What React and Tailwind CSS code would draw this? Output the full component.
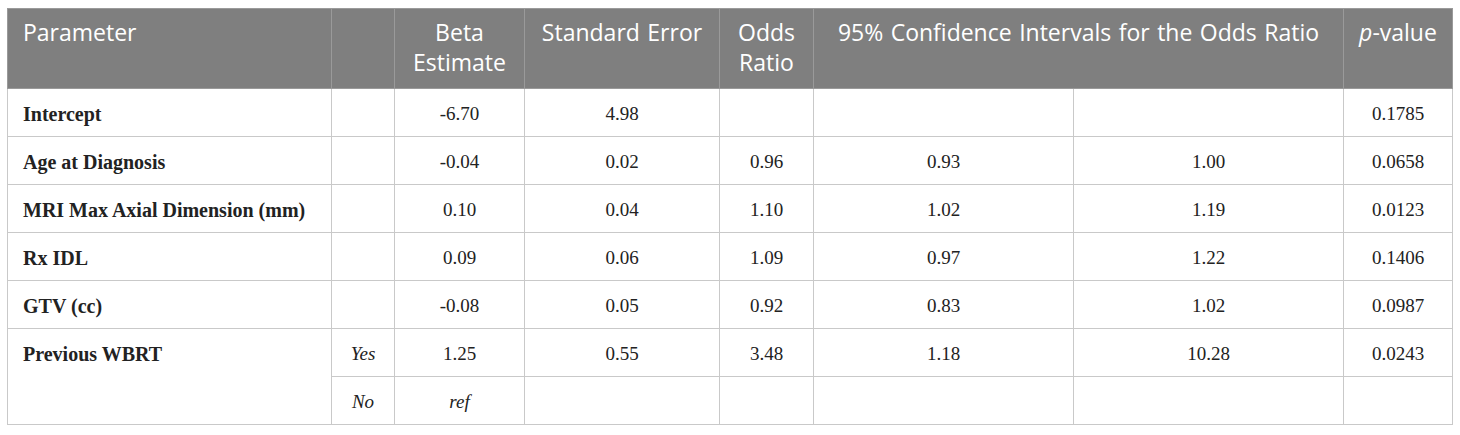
const columns = [324, 63, 130, 195, 94, 260, 270, 109];

const rows = [
  { label: "Intercept", beta: "-6.70", se: "4.98", or: "", lo: "", hi: "", p: "0.1785" },
  { label: "Age at Diagnosis", beta: "-0.04", se: "0.02", or: "0.96", lo: "0.93", hi: "1.00", p: "0.0658" },
  { label: "MRI Max Axial Dimension (mm)", beta: "0.10", se: "0.04", or: "1.10", lo: "1.02", hi: "1.19", p: "0.0123" },
  { label: "Rx IDL", beta: "0.09", se: "0.06", or: "1.09", lo: "0.97", hi: "1.22", p: "0.1406" },
  { label: "GTV (cc)", beta: "-0.08", se: "0.05", or: "0.92", lo: "0.83", hi: "1.02", p: "0.0987" },
];

const th = "border border-[#9a9a9a] align-top px-2 pt-[8px] font-normal text-[23px] leading-[30px] [word-spacing:1.5px] text-white";
const td = "border border-[#c9c9c9] text-center h-[48px] align-middle pt-[3px]";
const tdLabel = "border border-[#c9c9c9] h-[48px] align-middle pt-[3px] pl-[15px] font-bold text-[20px] text-left";

export default function App() {
  return (
    <div className="bg-white w-[1460px] h-[435px] pt-[8px] pl-[7px]">
      <table className="table-fixed border-collapse border border-[#c9c9c9] w-[1446px] font-['Liberation_Serif',serif] text-[19px] text-[#222]">
        <colgroup>
          {columns.map((w, i) => (
            <col key={i} style={{ width: w }} />
          ))}
        </colgroup>
        <thead>
          <tr className="bg-[#7f7f7f] h-[80px] font-['Open_Sans',sans-serif]">
            <th className={th + " text-left pl-[15px]"}>Parameter</th>
            <th className={th}></th>
            <th className={th + " text-center"}>
              Beta
              <br />
              Estimate
            </th>
            <th className={th + " text-center"}>Standard Error</th>
            <th className={th + " text-center"}>
              Odds
              <br />
              Ratio
            </th>
            <th colSpan={2} className={th + " text-center"}>
              95% Confidence Intervals for the Odds Ratio
            </th>
            <th className={th + " text-center"}>
              <i>p</i>-value
            </th>
          </tr>
        </thead>
        <tbody>
          {rows.map((r) => (
            <tr key={r.label}>
              <td className={tdLabel}>{r.label}</td>
              <td className={td}></td>
              <td className={td}>{r.beta}</td>
              <td className={td}>{r.se}</td>
              <td className={td}>{r.or}</td>
              <td className={td}>{r.lo}</td>
              <td className={td}>{r.hi}</td>
              <td className={td}>{r.p}</td>
            </tr>
          ))}
          <tr>
            <td rowSpan={2} className="border border-[#c9c9c9] align-top pt-[10px] pl-[15px] font-bold text-[20px] text-left">
              Previous WBRT
            </td>
            <td className={td + " italic"}>Yes</td>
            <td className={td}>1.25</td>
            <td className={td}>0.55</td>
            <td className={td}>3.48</td>
            <td className={td}>1.18</td>
            <td className={td}>10.28</td>
            <td className={td}>0.0243</td>
          </tr>
          <tr>
            <td className={td + " italic"}>No</td>
            <td className={td + " italic"}>ref</td>
            <td className={td}></td>
            <td className={td}></td>
            <td className={td}></td>
            <td className={td}></td>
            <td className={td}></td>
          </tr>
        </tbody>
      </table>
    </div>
  );
}
